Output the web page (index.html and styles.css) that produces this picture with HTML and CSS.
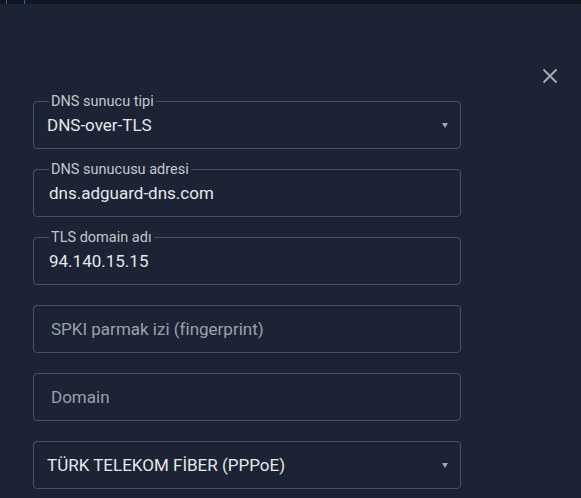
FILE: index.html
```html
<!DOCTYPE html>
<html lang="tr">
<head>
<meta charset="utf-8">
<link rel="stylesheet" href="styles.css">
</head>
<body>
<div class="topbar"><span class="mark grey"></span><span class="mark blue"></span></div>
<div class="dialog">
  <div class="head">
    <button class="close" aria-label="Kapat">
      <svg width="16" height="16" viewBox="0 0 16 16"><path d="M1.5 1.5 L14.5 14.5 M14.5 1.5 L1.5 14.5" stroke="#a3a9b3" stroke-width="2" fill="none"/></svg>
    </button>
  </div>
  <form class="form">
    <div class="field select">
      <span class="label">DNS sunucu tipi</span>
      <span class="value">DNS-over-TLS</span>
      <span class="arrow"></span>
    </div>
    <div class="field">
      <span class="label">DNS sunucusu adresi</span>
      <span class="value input">dns.adguard-dns.com</span>
    </div>
    <div class="field">
      <span class="label">TLS domain adı</span>
      <span class="value input">94.140.15.15</span>
    </div>
    <div class="field">
      <span class="placeholder">SPKI parmak izi (fingerprint)</span>
    </div>
    <div class="field">
      <span class="placeholder">Domain</span>
    </div>
    <div class="field select">
      <span class="value">TÜRK TELEKOM FİBER (PPPoE)</span>
      <span class="arrow"></span>
    </div>
  </form>
</div>
</body>
</html>
```

FILE: styles.css
```css
* { box-sizing: border-box; }
html, body { margin: 0; padding: 0; }
body {
  background: #1b2334;
  font-family: Roboto, "Liberation Sans", sans-serif;
  width: 581px;
  height: 498px;
  overflow: hidden;
}
.topbar {
  height: 4px;
  background: #111722;
  display: flex;
  gap: 17px;
  padding-left: 6px;
}
.mark { width: 1px; height: 4px; }
.mark.grey { background: #4b5260; }
.mark.blue { background: #1f6e9c; }
.dialog { padding: 0 33px; }
.head {
  display: flex;
  justify-content: flex-end;
  padding-top: 64px;
  margin-right: -10px;
  height: 97px;
}
.close {
  background: none;
  border: 0;
  padding: 0;
  width: 16px;
  height: 16px;
  cursor: pointer;
  display: flex;
}
.form {
  display: flex;
  flex-direction: column;
  gap: 20px;
  width: 428px;
}
.field {
  position: relative;
  height: 48px;
  border: 1px solid #4a5162;
  border-radius: 4px;
  display: flex;
  align-items: center;
  padding: 0 12px 0 15px;
}
.field.select { padding-left: 13px; }
.label {
  position: absolute;
  top: -8px;
  left: 15px;
  padding: 0 2px;
  background: #1b2334;
  font-size: 14.5px;
  line-height: 16px;
  color: #c3c7ce;
}
.value {
  font-size: 17px;
  color: #e6e8eb;
  flex: 1;
}
.placeholder {
  font-size: 17px;
  color: #9ba1aa;
  padding-left: 2px;
  margin-top: -1px;
}
.arrow {
  width: 0;
  height: 0;
  border-left: 3.5px solid transparent;
  border-right: 3.5px solid transparent;
  border-top: 5px solid #a3a9b3;
}
```
